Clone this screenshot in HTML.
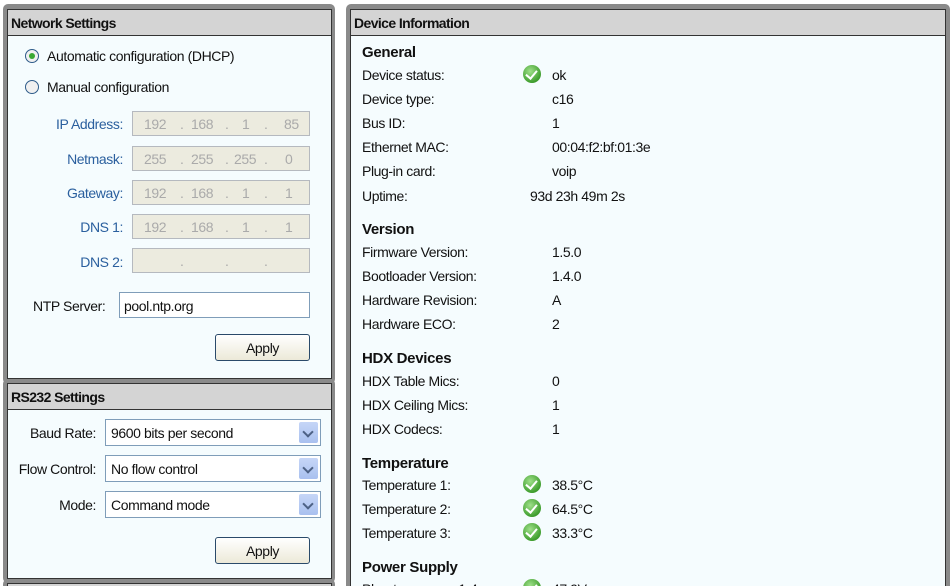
<!DOCTYPE html>
<html><head><style>
*{margin:0;padding:0;box-sizing:border-box}
html,body{width:952px;height:586px;overflow:hidden}
body{background:#fff;font-family:"Liberation Sans",sans-serif;font-size:14px;letter-spacing:-0.4px;color:#111;position:relative}
.frame{position:absolute;border:3px solid #8a8a8a;border-radius:5px;background:#8a8a8a}
.box{position:absolute;border:1px solid #333;background:#f5fcfe}
.hdr{position:absolute;left:0;right:0;top:0;height:26px;background:#d4d4d4;border-bottom:1px solid #333;font-weight:bold;font-size:14px;padding:5px 0 0 3px;letter-spacing:-0.6px}
.a{position:absolute;white-space:nowrap}
.lbl{color:#2a5f9e;text-align:right}
.ip{position:absolute;left:132px;width:178px;height:25px;background:#ecebdf;border:1px solid #b5b9bf;color:#aaa}
.ip span{position:absolute;top:4px}
.inp{position:absolute;background:#fff;border:1px solid #7f9db9}
.btn{position:absolute;width:95px;height:27px;border:1px solid #2a4a6a;border-radius:3px;background:linear-gradient(#fff,#ece9d8);text-align:center;padding-top:5px}
.sel{position:absolute;left:105px;width:216px;height:27px;background:#fff;border:1px solid #7f9db9;padding:5px 0 0 5px}
.sel i{position:absolute;right:2px;top:2px;width:19px;height:21px;background:linear-gradient(#c6d6f7,#a9c0ef);border-radius:2px}
.sel i:after{content:"";position:absolute;left:5px;top:6px;width:6px;height:6px;border-right:2px solid #4d6185;border-bottom:2px solid #4d6185;transform:rotate(45deg)}
.radio{position:absolute;width:14px;height:14px;border-radius:50%;border:1px solid #2f5c8a;background:#f0f0f0}
.ck{position:absolute;width:18px;height:18px;border-radius:50%;background:radial-gradient(circle at 40% 35%,#9fe08a,#3f9e2e 70%,#2c7a20)}
.ck:after{content:"";position:absolute;left:5px;top:3px;width:5px;height:9px;border-right:2.5px solid #fff;border-bottom:2.5px solid #fff;transform:rotate(40deg)}
.h{font-weight:bold;font-size:15px;letter-spacing:-0.3px}
</style></head><body>
<div class="frame" style="left:3px;top:4px;width:332px;height:380px"></div>
<div class="box" style="left:7px;top:9px;width:325px;height:370px">
<div class="hdr">Network Settings</div>
</div>
<div class="radio" style="left:25px;top:49px"><div style="position:absolute;left:3px;top:3px;width:6px;height:6px;border-radius:50%;background:#3aa832"></div></div>
<div class="a" style="left:47px;top:48px">Automatic configuration (DHCP)</div>
<div class="radio" style="left:25px;top:80px"></div>
<div class="a" style="left:47px;top:79px">Manual configuration</div>

<div class="a lbl" style="left:20px;width:103px;top:116px">IP Address:</div>
<div class="ip" style="top:111px"><span style="left:11px">192</span><span style="left:47px">.</span><span style="left:58px">168</span><span style="left:92px">.</span><span style="left:109px">1</span><span style="left:131px">.</span><span style="left:151px">85</span></div>
<div class="a lbl" style="left:20px;width:103px;top:151px">Netmask:</div>
<div class="ip" style="top:146px"><span style="left:11px">255</span><span style="left:47px">.</span><span style="left:58px">255</span><span style="left:92px">.</span><span style="left:101px">255</span><span style="left:131px">.</span><span style="left:152px">0</span></div>
<div class="a lbl" style="left:20px;width:103px;top:185px">Gateway:</div>
<div class="ip" style="top:180px"><span style="left:11px">192</span><span style="left:47px">.</span><span style="left:58px">168</span><span style="left:92px">.</span><span style="left:109px">1</span><span style="left:131px">.</span><span style="left:152px">1</span></div>
<div class="a lbl" style="left:20px;width:103px;top:219px">DNS 1:</div>
<div class="ip" style="top:214px"><span style="left:11px">192</span><span style="left:47px">.</span><span style="left:58px">168</span><span style="left:92px">.</span><span style="left:109px">1</span><span style="left:131px">.</span><span style="left:152px">1</span></div>
<div class="a lbl" style="left:20px;width:103px;top:254px">DNS 2:</div>
<div class="ip" style="top:248px"><span style="left:47px">.</span><span style="left:92px">.</span><span style="left:131px">.</span></div>

<div class="a" style="left:33px;top:298px">NTP Server:</div>
<div class="inp" style="left:119px;top:292px;width:191px;height:26px;padding:5px 0 0 4px">pool.ntp.org</div>
<div class="btn" style="left:215px;top:334px">Apply</div>

<div class="frame" style="left:3px;top:379px;width:332px;height:204px"></div>
<div class="box" style="left:7px;top:383px;width:325px;height:196px">
<div class="hdr">RS232 Settings</div>
</div>
<div class="a" style="left:20px;width:76px;text-align:right;top:425px">Baud Rate:</div>
<div class="sel" style="top:419px">9600 bits per second<i></i></div>
<div class="a" style="left:6px;width:90px;text-align:right;top:461px">Flow Control:</div>
<div class="sel" style="top:455px">No flow control<i></i></div>
<div class="a" style="left:20px;width:76px;text-align:right;top:497px">Mode:</div>
<div class="sel" style="top:491px">Command mode<i></i></div>
<div class="btn" style="left:215px;top:537px">Apply</div>
<div class="frame" style="left:3px;top:579px;width:332px;height:20px"></div>
<div class="box" style="left:7px;top:583px;width:325px;height:20px;background:#d4d4d4"></div>

<div class="frame" style="left:346px;top:4px;width:604px;height:600px"></div>
<div class="box" style="left:350px;top:9px;width:596px;height:590px">
<div class="hdr">Device Information</div>
</div>

<div class="a h" style="left:362px;top:44px">General</div>
<div class="a" style="left:362px;top:67px">Device status:</div><div class="ck" style="left:523px;top:65px"></div><div class="a" style="left:552px;top:67px">ok</div>
<div class="a" style="left:362px;top:91px">Device type:</div><div class="a" style="left:552px;top:91px">c16</div>
<div class="a" style="left:362px;top:115px">Bus ID:</div><div class="a" style="left:552px;top:115px">1</div>
<div class="a" style="left:362px;top:139px">Ethernet MAC:</div><div class="a" style="left:552px;top:139px">00:04:f2:bf:01:3e</div>
<div class="a" style="left:362px;top:163px">Plug-in card:</div><div class="a" style="left:552px;top:163px">voip</div>
<div class="a" style="left:362px;top:188px">Uptime:</div><div class="a" style="left:530px;top:188px">93d 23h 49m 2s</div>

<div class="a h" style="left:362px;top:221px">Version</div>
<div class="a" style="left:362px;top:244px">Firmware Version:</div><div class="a" style="left:552px;top:244px">1.5.0</div>
<div class="a" style="left:362px;top:268px">Bootloader Version:</div><div class="a" style="left:552px;top:268px">1.4.0</div>
<div class="a" style="left:362px;top:292px">Hardware Revision:</div><div class="a" style="left:552px;top:292px">A</div>
<div class="a" style="left:362px;top:316px">Hardware ECO:</div><div class="a" style="left:552px;top:316px">2</div>

<div class="a h" style="left:362px;top:350px">HDX Devices</div>
<div class="a" style="left:362px;top:373px">HDX Table Mics:</div><div class="a" style="left:552px;top:373px">0</div>
<div class="a" style="left:362px;top:397px">HDX Ceiling Mics:</div><div class="a" style="left:552px;top:397px">1</div>
<div class="a" style="left:362px;top:421px">HDX Codecs:</div><div class="a" style="left:552px;top:421px">1</div>

<div class="a h" style="left:362px;top:455px">Temperature</div>
<div class="a" style="left:362px;top:477px">Temperature 1:</div><div class="ck" style="left:523px;top:475px"></div><div class="a" style="left:552px;top:477px">38.5°C</div>
<div class="a" style="left:362px;top:501px">Temperature 2:</div><div class="ck" style="left:523px;top:499px"></div><div class="a" style="left:552px;top:501px">64.5°C</div>
<div class="a" style="left:362px;top:525px">Temperature 3:</div><div class="ck" style="left:523px;top:523px"></div><div class="a" style="left:552px;top:525px">33.3°C</div>

<div class="a h" style="left:362px;top:559px">Power Supply</div>
<div class="a" style="left:362px;top:581px">Phantom power 1-4:</div><div class="ck" style="left:523px;top:579px"></div><div class="a" style="left:552px;top:581px">47.9V</div>
</body></html>
